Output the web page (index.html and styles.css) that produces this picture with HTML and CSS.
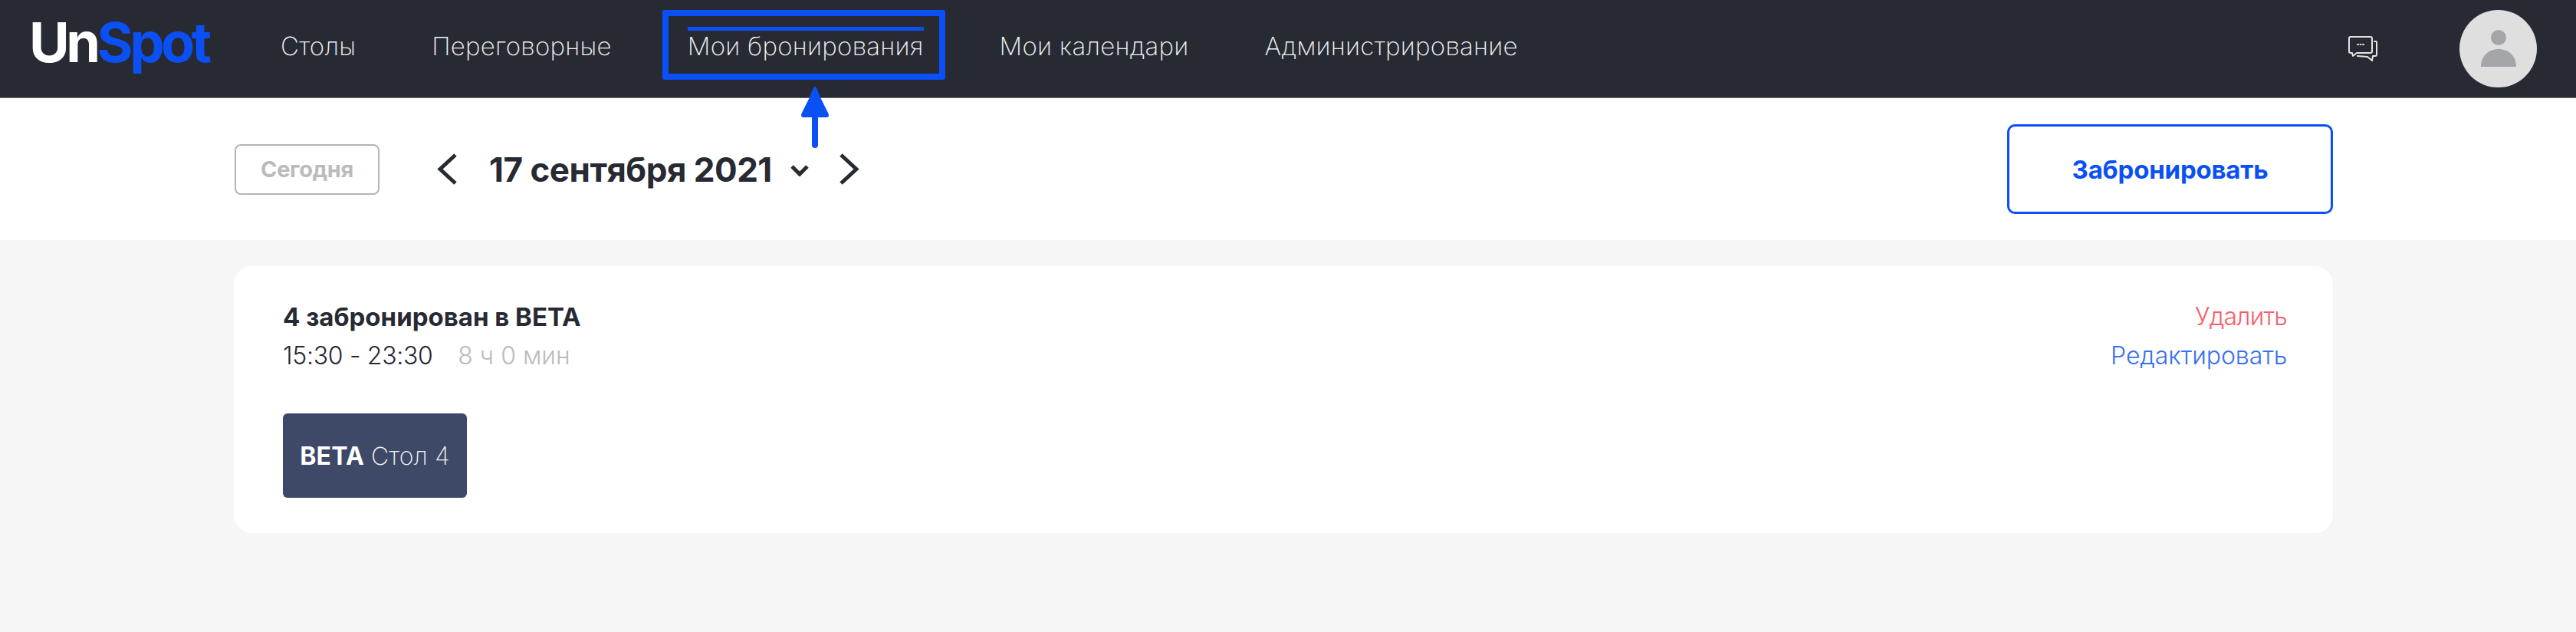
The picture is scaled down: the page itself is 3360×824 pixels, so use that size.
FILE: index.html
```html
<!DOCTYPE html>
<html lang="ru">
<head>
  <meta charset="UTF-8">
  <title>UnSpot</title>
  <link rel="stylesheet" href="styles.css">
</head>
<body>

  <header class="header">
    <div class="logo">Un<span class="logo-accent">Spot</span></div>
    <nav class="nav">
      <a class="nav-link">Столы</a>
      <a class="nav-link">Переговорные</a>
      <a class="nav-link active">Мои бронирования</a>
      <a class="nav-link">Мои календари</a>
      <a class="nav-link">Администрирование</a>
    </nav>
    <svg class="chat-icon" width="38" height="33" viewBox="0 0 38 33" fill="none" stroke="#e4e4e4" stroke-width="2" stroke-linejoin="round" stroke-linecap="round">
      <path d="M3 1h26a2 2 0 0 1 2 2v17a2 2 0 0 1-2 2H11l-5 4-1-4H3a2 2 0 0 1-2-2V3a2 2 0 0 1 2-2z"/>
      <path d="M34 7h2a1 1 0 0 1 1 1v16a2 2 0 0 1-2 2h-3l-1 6-6-5-13-1"/>
      <path d="M12 11h1M15.500 11h1M19 11h1"/>
    </svg>
    <div class="avatar">
      <svg width="46" height="50" viewBox="0 0 46 50" fill="#a4a5a8">
        <circle cx="23" cy="10" r="10"/>
        <path d="M0 48C0 34 10 25 23 25s23 9 23 23z"/>
      </svg>
    </div>
  </header>

  <section class="toolbar">
    <button class="today">Сегодня</button>
    <svg class="arrow-left" width="26" height="41" viewBox="0 0 26 41" fill="none" stroke="#272a33" stroke-width="5">
      <path d="M24 2L4 20.500 24 39"/>
    </svg>
    <div class="date">17 сентября 2021</div>
    <svg class="date-caret" width="24" height="15" viewBox="0 0 24 15" fill="none" stroke="#272a33" stroke-width="5">
      <path d="M2 2l10 10L22 2"/>
    </svg>
    <svg class="arrow-right" width="26" height="41" viewBox="0 0 26 41" fill="none" stroke="#272a33" stroke-width="5">
      <path d="M2 2l20 18.500L2 39"/>
    </svg>
    <button class="book">Забронировать</button>
  </section>

  <main class="content">
    <div class="card">
      <div class="card-top">
        <div>
          <div class="card-title">4 забронирован в BETA</div>
          <div class="card-time">15:30 - 23:30 <span class="card-duration">8 ч 0 мин</span></div>
        </div>
        <div class="card-actions">
          <a class="delete">Удалить</a>
          <a class="edit">Редактировать</a>
        </div>
      </div>
      <div class="tag"><b>BETA</b> Стол 4</div>
    </div>
  </main>

  <!-- annotation over the screenshot -->
  <div class="mark-box"></div>
  <svg class="mark-arrow" width="38" height="80" viewBox="0 0 38 80" fill="#0a50f5">
    <path d="M19 0c2 0 4 6 8 16l9 18c2 4 1 6-3 6h-10v36a4 4 0 0 1-8 0V40H5c-4 0-5-2-3-6l9-18C15 6 17 0 19 0z"/>
  </svg>

</body>
</html>
```

FILE: styles.css
```css
* {
  box-sizing: border-box;
}

body {
  margin: 0;
  height: 824px;
  overflow: hidden;
  position: relative;
  background-color: #f6f6f6;
  font-family: 'Inter', 'Noto Sans', sans-serif;
  color: #272a33;
}

.header {
  display: flex;
  align-items: center;
  height: 128px;
  padding: 0 51px 0 38px;
  background-color: #272a33;
  border-bottom: 1px solid #6d6f75;
}

.logo {
  width: 328px;
  margin-top: -18px;
  font-size: 72px;
  font-weight: 700;
  letter-spacing: -4.500px;
  color: #fff;
}

.logo-accent {
  color: #0a50f5;
}

.nav {
  display: flex;
  gap: 99px;
  margin-top: -8px;
}

.nav-link {
  position: relative;
  font-size: 33px;
  font-weight: 250;
  line-height: 40px;
  letter-spacing: 0.250px;
  color: #f2f2f2;
}

.nav-link.active::before {
  content: "";
  position: absolute;
  left: 0;
  right: 0;
  top: -5px;
  height: 5px;
  background-color: #0a50f5;
}

.chat-icon {
  margin-left: auto;
  margin-right: 107px;
}

.avatar {
  display: flex;
  align-items: center;
  justify-content: center;
  width: 101px;
  height: 101px;
  border-radius: 50%;
  background-color: #dfdfe0;
}

.toolbar {
  display: flex;
  align-items: center;
  height: 185px;
  padding: 0 317px 0 306px;
  background-color: #fff;
}

.today {
  width: 189px;
  height: 66px;
  padding: 0;
  margin-right: 75px;
  background: #fff;
  border: 2px solid #b5b5b5;
  border-radius: 8px;
  font-family: inherit;
  font-size: 29px;
  font-weight: 700;
  letter-spacing: -0.300px;
  color: #bbb;
}

.date {
  margin: 0 24px 0 42px;
  font-size: 44px;
  font-weight: 700;
  letter-spacing: -0.500px;
}

.date-caret {
  margin-top: 4px;
  margin-right: 40px;
}

.book {
  width: 425px;
  height: 117px;
  padding: 0;
  margin-left: auto;
  background: #fff;
  border: 3px solid #0a50f5;
  border-radius: 10px;
  font-family: inherit;
  font-size: 33px;
  font-weight: 700;
  letter-spacing: -0.200px;
  color: #0a50f5;
}

.content {
  padding: 34px 317px 0 305px;
}

.card {
  height: 348px;
  padding: 46px 60px 0 64px;
  background-color: #fff;
  border-radius: 24px;
}

.card-top {
  display: flex;
  justify-content: space-between;
  height: 146px;
}

.card-title {
  font-size: 33px;
  font-weight: 700;
  line-height: 40px;
}

.card-time {
  margin-top: 11px;
  font-size: 32px;
  font-weight: 300;
  line-height: 40px;
  letter-spacing: -0.300px;
}

.card-duration {
  margin-left: 24px;
  letter-spacing: 0;
  color: #bbb;
}

.card-actions {
  display: flex;
  flex-direction: column;
  align-items: flex-end;
  gap: 11px;
  font-size: 32px;
  font-weight: 300;
  line-height: 40px;
}

.delete {
  letter-spacing: -0.800px;
  color: #f4606c;
}

.edit {
  letter-spacing: -0.100px;
  color: #3a6ff0;
}

.tag {
  display: flex;
  align-items: center;
  justify-content: center;
  gap: 9px;
  width: 240px;
  height: 110px;
  background-color: #3d4966;
  border-radius: 6px;
  font-size: 32px;
  font-weight: 250;
  letter-spacing: 0.200px;
  color: #f2f2f2;
}

.tag b {
  font-weight: 700;
  color: #fff;
}

.mark-box {
  position: absolute;
  left: 864px;
  top: 13px;
  width: 369px;
  height: 91px;
  border: 8px solid #0a50f5;
  border-radius: 3px;
}

.mark-arrow {
  position: absolute;
  left: 1044px;
  top: 113px;
}
```
